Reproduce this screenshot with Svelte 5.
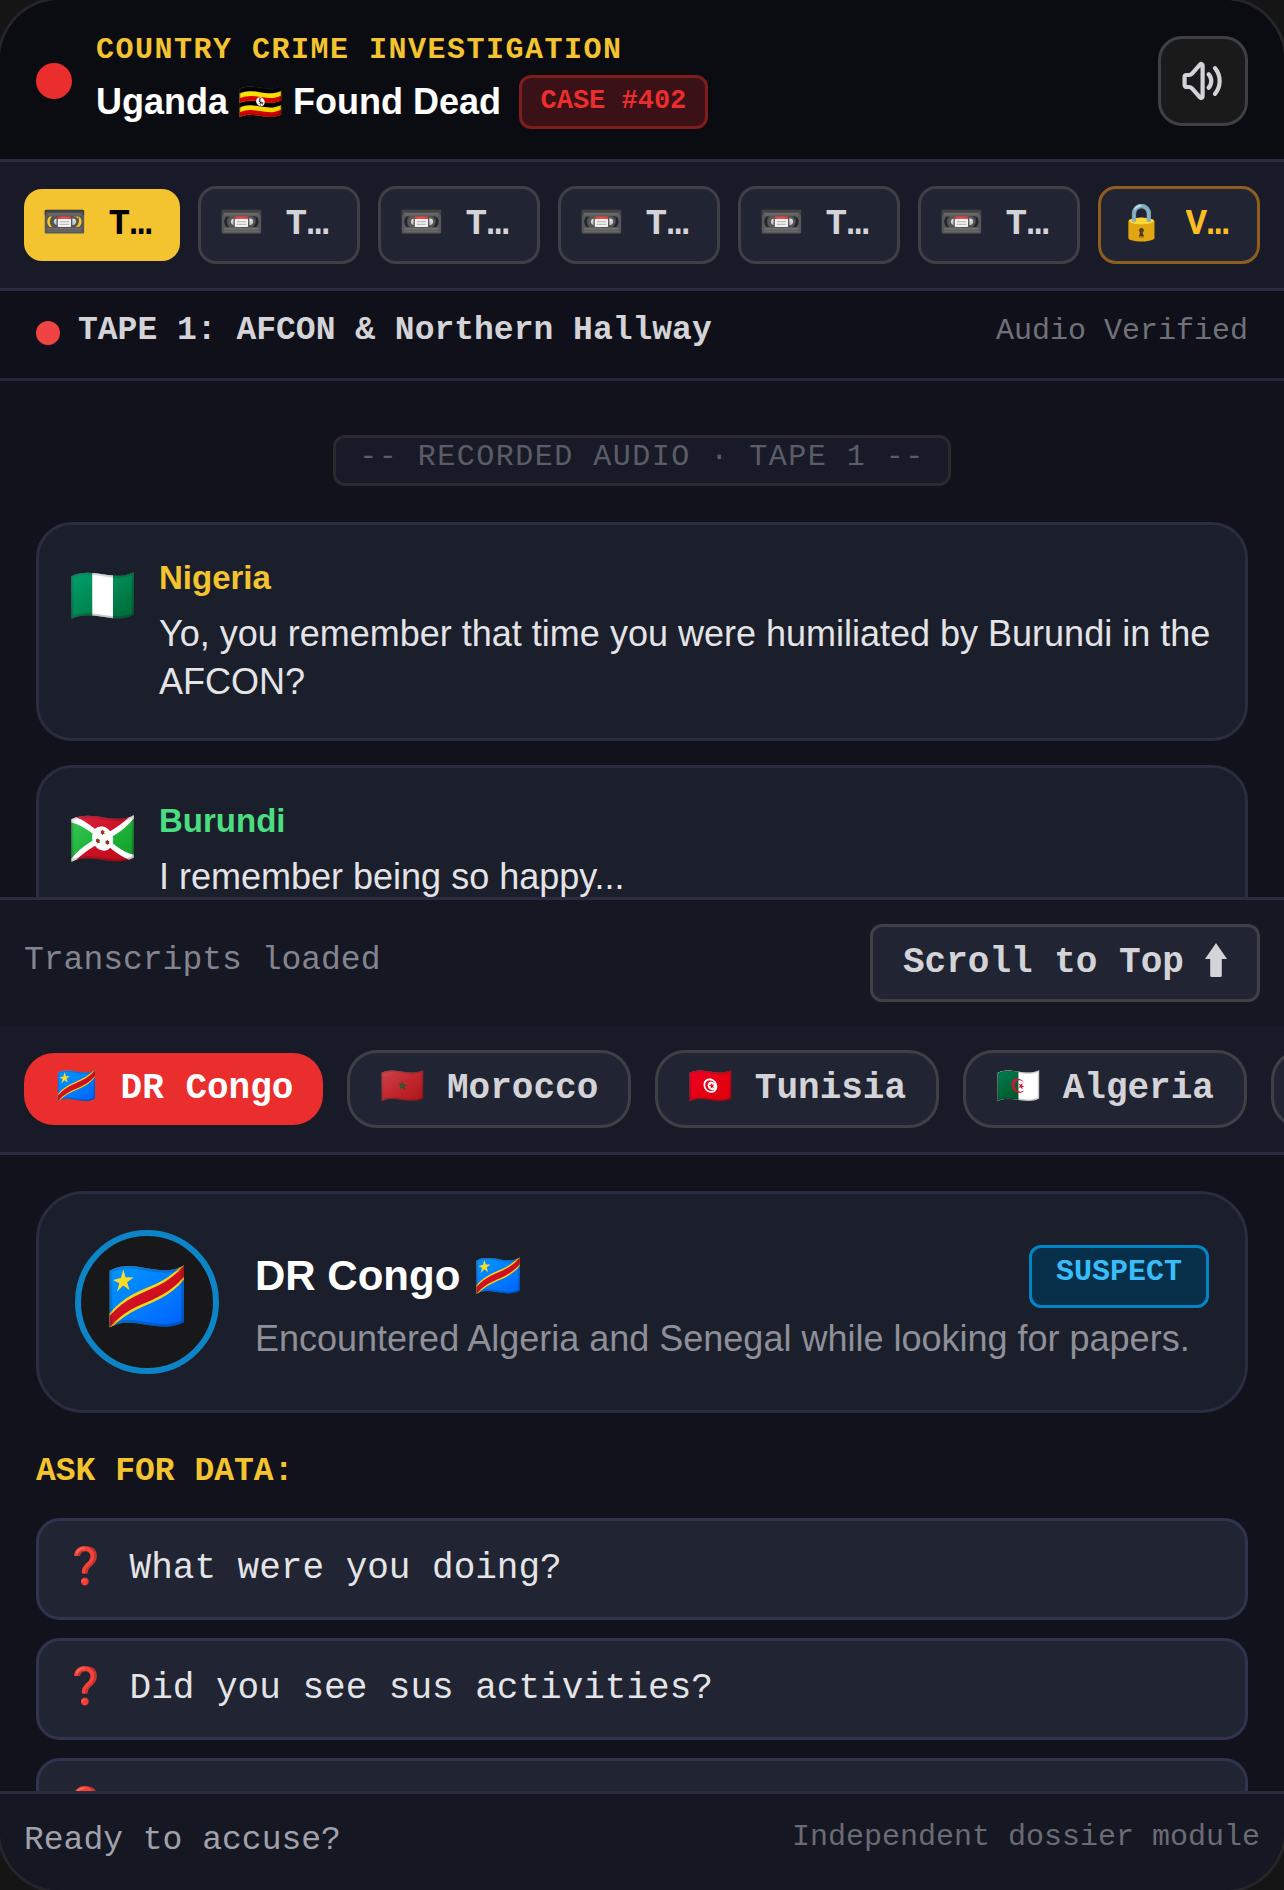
<script>
  const tapes = [1, 2, 3, 4, 5, 6]
  const countries = [
    { name: 'DR Congo', flag: '🇨🇩' },
    { name: 'Morocco', flag: '🇲🇦' },
    { name: 'Tunisia', flag: '🇹🇳' },
    { name: 'Algeria', flag: '🇩🇿' },
    { name: 'Senegal', flag: '🇸🇳' }
  ]
  const questions = ['What were you doing?', 'Did you see sus activities?', 'Where were you that night?']
  const messages = [
    { who: 'Nigeria', flag: '🇳🇬', tone: 'gold', text: 'Yo, you remember that time you were humiliated by Burundi in the AFCON?' },
    { who: 'Burundi', flag: '🇧🇮', tone: 'green', text: 'I remember being so happy...' }
  ]
</script>

<div class="shell">
<div class="phone">
  <header class="top">
    <span class="live"></span>
    <div class="headline">
      <div class="kicker">COUNTRY CRIME INVESTIGATION</div>
      <div class="title-row">
        <h1>Uganda 🇺🇬 Found Dead</h1>
        <span class="case">CASE #402</span>
      </div>
    </div>
    <button class="sound" aria-label="Sound">
      <svg width="48" height="48" viewBox="-0.8 0 24 24" fill="none" stroke="currentColor" stroke-width="2.1" stroke-linecap="round" stroke-linejoin="round">
        <path d="M11 4.2v15.6a.7.7 0 0 1-1.2.5L5.6 15.6a2 2 0 0 0-1.4-.6H3a1 1 0 0 1-1-1v-4a1 1 0 0 1 1-1h1.2a2 2 0 0 0 1.4-.6l4.2-4.7a.7.7 0 0 1 1.2.5z" />
        <path d="M14 8.6a5 5 0 0 1 0 6.8" />
        <path d="M17.2 5.6a10 10 0 0 1 0 12.8" />
      </svg>
    </button>
  </header>

  <nav class="tapes">
    {#each tapes as n, i}
      <button class="tape" class:on={i === 0}>
        <span class="ico">📼</span><span class="lbl">TAPE {n}</span>
      </button>
    {/each}
    <button class="tape vault">
      <span class="ico">🔒</span><span class="lbl">VAULT</span>
    </button>
  </nav>

  <div class="status">
    <div class="status-left"><span class="rec"></span><span>TAPE 1: AFCON &amp; Northern Hallway</span></div>
    <span class="verified">Audio Verified</span>
  </div>

  <main class="log">
    <div class="stamp">-- RECORDED AUDIO · TAPE 1 --</div>
    {#each messages as m}
      <article class="msg">
        <span class="msg-flag">{m.flag}</span>
        <div>
          <div class="who {m.tone}">{m.who}</div>
          <p>{m.text}</p>
        </div>
      </article>
    {/each}
  </main>

  <div class="loaded">
    <span class="loaded-note">Transcripts loaded</span>
    <button class="scroll">Scroll to Top <svg class="arrow" width="22" height="34" viewBox="0 0 22 34"><path d="M11 0 L22 16 H16.8 V32.5 Q16.8 34 15.3 34 H6.7 Q5.2 34 5.2 32.5 V16 H0 Z" fill="currentColor" /></svg></button>
  </div>

  <nav class="countries">
    {#each countries as c, i}
      <button class="country" class:on={i === 0}>
        <span class="cflag">{c.flag}</span><span>{c.name}</span>
      </button>
    {/each}
  </nav>

  <section class="dossier">
    <div class="suspect">
      <div class="avatar"><span class="avatar-flag">🇨🇩</span></div>
      <div class="info">
        <div class="info-top">
          <h2>DR Congo 🇨🇩</h2>
          <span class="tag">SUSPECT</span>
        </div>
        <p>Encountered Algeria and Senegal while looking for papers.</p>
      </div>
    </div>
    <h3>ASK FOR DATA:</h3>
    <div class="asks">
      {#each questions as q}
        <button class="ask"><span class="q">❓</span><span>{q}</span></button>
      {/each}
    </div>
  </section>

  <footer class="bottom">
    <span class="ready">Ready to accuse?</span>
    <span class="module">Independent dossier module</span>
  </footer>
</div>
</div>

<style>
  :global(body) {
    background: #151515;
  }

  .shell {
    width: 1284px;
    height: 1890px;
    overflow: hidden;
  }

  .phone {
    height: 1890px;
    display: flex;
    flex-direction: column;
    overflow: hidden;
    border-radius: 60px;
    background: #11121b;
    font-family: "Liberation Mono", monospace;
    box-shadow: 0 0 0 3px #26262a;
  }

  button {
    font-family: inherit;
    cursor: pointer;
  }

  .top {
    height: 159px;
    flex: none;
    display: flex;
    align-items: center;
    gap: 24px;
    padding: 3px 36px 0;
    box-sizing: border-box;
    background: #0b0c12;
  }

  .live {
    width: 36px;
    height: 36px;
    border-radius: 50%;
    background: #ea2d2d;
    flex: none;
  }

  .headline {
    flex: 1;
    min-width: 0;
    padding-bottom: 2px;
  }

  .kicker {
    font-size: 30px;
    line-height: 36px;
    font-weight: 700;
    letter-spacing: 1.5px;
    color: #f4c430;
  }

  .title-row {
    display: flex;
    align-items: center;
    gap: 18px;
    margin-top: 7px;
  }

  h1 {
    margin: 0;
    font: 700 36px/54px "Liberation Sans", sans-serif;
    color: #fff;
  }

  .case {
    font-size: 27px;
    line-height: 36px;
    font-weight: 700;
    color: #ea2d2d;
    background: #3a1116;
    border: 3px solid #7f1d1d;
    border-radius: 12px;
    padding: 5px 18.5px 7px;
  }

  .sound {
    width: 90px;
    height: 90px;
    flex: none;
    display: flex;
    align-items: center;
    justify-content: center;
    padding: 0;
    background: #1a1a1a;
    border: 3px solid #3f3f46;
    border-radius: 24px;
    color: #d4d4d8;
  }

  .tapes {
    flex: none;
    display: flex;
    align-items: center;
    gap: 18px;
    height: 126px;
    padding: 0 24px;
    background: #181b27;
    border-top: 3px solid #2a2d3f;
    border-bottom: 3px solid #2a2d3f;
  }

  .tape {
    flex: 1 1 0;
    min-width: 0;
    display: flex;
    gap: 21.6px;
    padding: 9px 18px;
    background: #212433;
    border: 3px solid #3f3f46;
    border-radius: 18px;
    color: #d4d4d8;
    font-size: 36px;
    line-height: 54px;
    font-weight: 700;
  }

  .tape.on {
    background: #f4c430;
    border: 0;
    color: #000;
  }

  .tape.vault {
    border-color: #8f5e1e;
    color: #fbbf24;
  }

  .lbl {
    flex: 1;
    min-width: 0;
    overflow: hidden;
    white-space: nowrap;
    text-overflow: ellipsis;
    text-align: left;
  }

  .ico {
    flex: none;
  }

  .status {
    flex: none;
    height: 90px;
    display: flex;
    justify-content: space-between;
    padding: 19px 36px 0;
    box-sizing: border-box;
    background: #0f1019;
    border-bottom: 3px solid #24263a;
  }

  .status-left {
    display: flex;
    gap: 18px;
    font-size: 33px;
    line-height: 42px;
    font-weight: 700;
    color: #d4d4d8;
  }

  .rec {
    width: 24px;
    height: 24px;
    margin-top: 11px;
    border-radius: 50%;
    background: #ef4444;
  }

  .verified {
    font-size: 30px;
    line-height: 42px;
    color: #71717a;
  }

  .log {
    flex: none;
    height: 516px;
    overflow: hidden;
    box-sizing: border-box;
    padding: 54px 36px 0;
    display: flex;
    flex-direction: column;
    gap: 24px;
  }

  .stamp {
    align-self: center;
    margin-bottom: 12px;
    padding: 1px 23px 8px;
    font-size: 30px;
    line-height: 36px;
    letter-spacing: 1.5px;
    color: #5c5c66;
    background: #181b27;
    border: 3px solid #2a2a2e;
    border-radius: 12px;
    white-space: nowrap;
    flex: none;
  }

  .msg {
    flex: none;
    display: flex;
    gap: 23px;
    padding: 30px 30px 32px;
    background: #1b1e2b;
    border: 3px solid #2a2d3f;
    border-radius: 36px;
    font-family: "Liberation Sans", sans-serif;
  }

  .msg-flag {
    font-size: 54px;
    line-height: 81px;
    flex: none;
  }

  .who {
    font-size: 33px;
    line-height: 46px;
    font-weight: 700;
    margin-bottom: 9px;
  }

  .gold {
    color: #f4c430;
  }

  .green {
    color: #4ade80;
  }

  .msg p {
    margin: 0;
    font-size: 36px;
    line-height: 48px;
    color: #e4e4e7;
  }

  .loaded {
    flex: none;
    height: 126px;
    display: flex;
    align-items: center;
    justify-content: space-between;
    padding: 0 24px;
    background: #151723;
    border-top: 3px solid #2a2d3f;
    font-size: 33px;
    color: #84848f;
  }

  .loaded-note {
    padding-bottom: 5px;
  }

  .scroll {
    width: 390px;
    height: 78px;
    flex: none;
    padding: 9px 30px;
    font-size: 36px;
    line-height: 54px;
    font-weight: 700;
    color: #d4d4d8;
    background: #212433;
    border: 3px solid #3f3f46;
    border-radius: 12px;
    white-space: nowrap;
    text-align: left;
  }

  .arrow {
    vertical-align: -5px;
  }

  .countries {
    flex: none;
    height: 126px;
    display: flex;
    align-items: center;
    gap: 24px;
    padding: 0 24px;
    overflow: hidden;
    background: #181b27;
    border-bottom: 3px solid #2a2d3f;
  }

  .country {
    flex: none;
    display: flex;
    gap: 21.6px;
    padding: 9px 30px;
    font-size: 36px;
    line-height: 54px;
    font-weight: 700;
    color: #d4d4d8;
    background: #212433;
    border: 3px solid #3f3f46;
    border-radius: 30px;
  }

  .country.on {
    background: #ea2d2d;
    border: 0;
    color: #fff;
  }

  .cflag {
    flex: none;
  }

  .dossier {
    flex: 1;
    min-height: 0;
    overflow: hidden;
    padding: 36px;
  }

  .suspect {
    display: flex;
    align-items: center;
    gap: 36px;
    padding: 36px;
    background: #1b1e2b;
    border: 3px solid #2a2d3f;
    border-radius: 48px;
  }

  .avatar {
    width: 144px;
    height: 144px;
    flex: none;
    box-sizing: border-box;
    display: flex;
    align-items: center;
    justify-content: center;
    padding-bottom: 7px;
    border-radius: 50%;
    border: 6px solid #0c84c6;
    background: #18181b;
    font-size: 72px;
  }

  .info {
    flex: 1;
    min-width: 0;
    padding-top: 3px;
    font-family: "Liberation Sans", sans-serif;
  }

  .info-top {
    display: flex;
    align-items: center;
    justify-content: space-between;
  }

  h2 {
    margin: 0;
    font-size: 42px;
    line-height: 54px;
    font-weight: 700;
    color: #fff;
  }

  .tag {
    font-family: "Liberation Mono", monospace;
    font-size: 30px;
    line-height: 36px;
    font-weight: 700;
    color: #38bdf8;
    background: #082f49;
    border: 3px solid #0284c7;
    border-radius: 12px;
    padding: 6px 24px 15px;
  }

  .info p {
    margin: 7px 0 0;
    font-size: 36px;
    line-height: 48px;
    color: #8f8f98;
  }

  h3 {
    margin: 38px 0 25px;
    font-size: 33px;
    line-height: 42px;
    font-weight: 700;
    color: #f4c430;
  }

  .asks {
    display: flex;
    flex-direction: column;
    gap: 18px;
  }

  .ask {
    display: flex;
    gap: 21.6px;
    padding: 21px 24px;
    text-align: left;
    font-size: 36px;
    line-height: 54px;
    color: #e4e4e7;
    background: #212433;
    border: 3px solid #30344f;
    border-radius: 24px;
  }

  .bottom {
    flex: none;
    height: 99px;
    box-sizing: border-box;
    display: flex;
    justify-content: space-between;
    padding: 23px 24px 0;
    background: #151723;
    border-top: 3px solid #2a2d3f;
  }

  .ready {
    font-size: 33px;
    line-height: 48px;
    color: #a1a1aa;
  }

  .module {
    margin-top: -1px;
    font-size: 30px;
    line-height: 42px;
    color: #6b6b74;
  }
</style>
